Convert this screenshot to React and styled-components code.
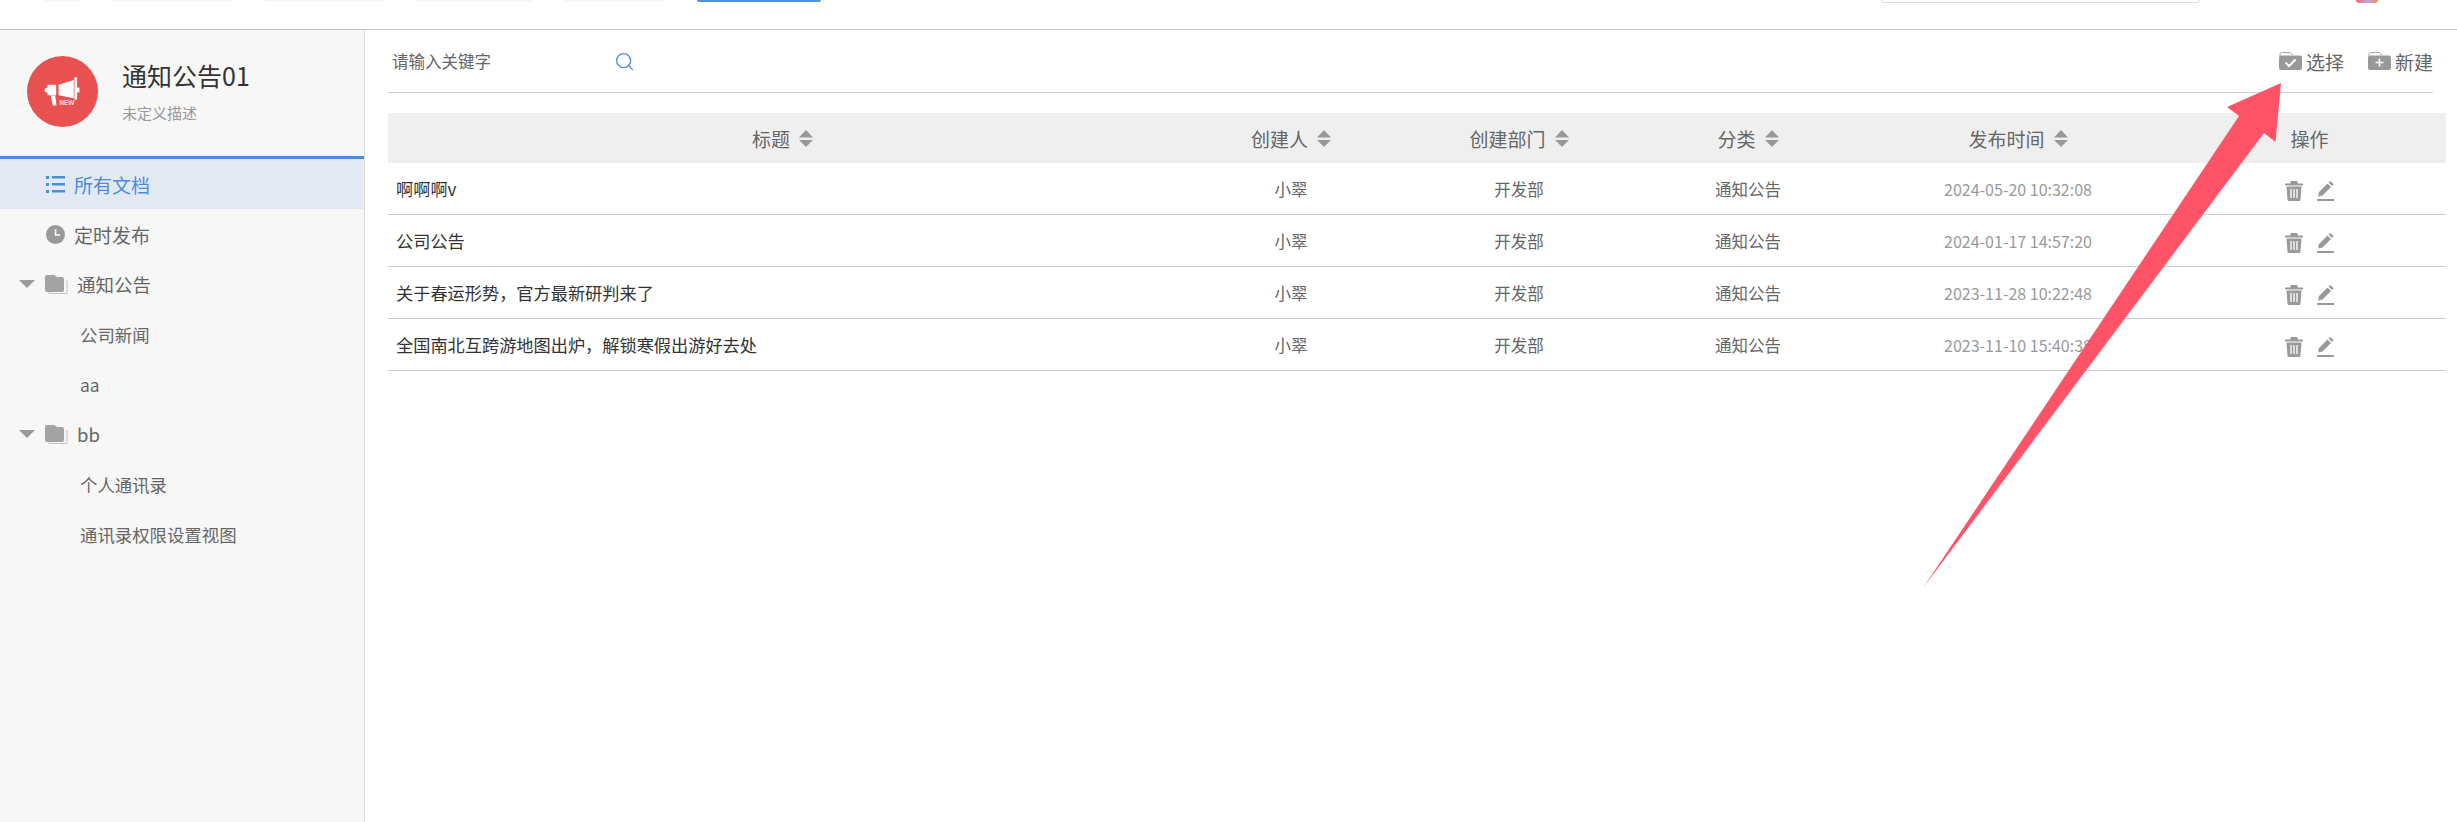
import React from 'react'
import styled, { createGlobalStyle } from 'styled-components'
import { Search } from 'lucide-react'

const GlobalStyle = createGlobalStyle`
    html, body {
        margin: 0;
        padding: 0;
        background: #fff;
        overflow: hidden;
    }
    body {
        font-family: "Noto Sans CJK SC", "Noto Sans", sans-serif;
    }
    * {
        box-sizing: border-box;
    }
`

const tabs = [35, 121, 119, 117, 100]

const tree = [
    { type: 'folder', name: '通知公告' },
    { type: 'sub', name: '公司新闻' },
    { type: 'sub', name: 'aa' },
    { type: 'folder', name: 'bb' },
    { type: 'sub', name: '个人通讯录' },
    { type: 'sub', name: '通讯录权限设置视图' },
]

const columns = [
    { name: '创建人', key: 'user' },
    { name: '创建部门', key: 'dept' },
    { name: '分类', key: 'cat' },
    { name: '发布时间', key: 'time' },
]

const rows = [
    { title: '啊啊啊v', user: '小翠', dept: '开发部', cat: '通知公告', time: '2024-05-20 10:32:08' },
    { title: '公司公告', user: '小翠', dept: '开发部', cat: '通知公告', time: '2024-01-17 14:57:20' },
    { title: '关于春运形势，官方最新研判来了', user: '小翠', dept: '开发部', cat: '通知公告', time: '2023-11-28 10:22:48' },
    { title: '全国南北互跨游地图出炉，解锁寒假出游好去处', user: '小翠', dept: '开发部', cat: '通知公告', time: '2023-11-10 15:40:38' },
]

const LogoIcon = () => (
    <svg width="71" height="71" viewBox="52 48 214 214">
        <circle cx="159" cy="155" r="107" fill="#e95050" />
        <g fill="#fff">
            <path d="M105 151q0-7 9-8v-8h26v31h-26v-7q-9-1-9-8z" />
            <path d="M147 135l46-15v55l-46-9z" />
            <rect x="195" y="112" width="8" height="68" rx="3" />
            <rect x="203" y="143" width="7" height="15" rx="2" />
            <path d="M123 167h14l4 30h-11z" />
        </g>
        <text x="149" y="195" fontSize="20" fontWeight="700" fontFamily="Liberation Sans" fill="#fbd5d5">NEW</text>
    </svg>
)

const ListIcon = () => (
    <svg width="19" height="19" viewBox="0 0 19 19" fill="#4a8ce0">
        <rect x="0" y="1" width="3" height="3" />
        <rect x="6" y="1" width="13" height="2.5" />
        <rect x="0" y="8" width="3" height="3" />
        <rect x="6" y="8" width="13" height="2.5" />
        <rect x="0" y="15" width="3" height="3" />
        <rect x="6" y="15" width="13" height="2.5" />
    </svg>
)

const ClockIcon = () => (
    <svg width="19" height="19" viewBox="0 0 19 19">
        <circle cx="9.5" cy="9.5" r="9.5" fill="#999" />
        <path d="M9.5 4v6h4.5" fill="none" stroke="#fff" strokeWidth="1.6" />
    </svg>
)

const TreeFolderIcon = () => (
    <svg width="23" height="19" viewBox="0 0 23 19">
        <path d="M20.5 6h1.5v12.5H4v-1.5" fill="none" stroke="#c4c4c4" strokeWidth="1" />
        <path d="M0 2a2 2 0 0 1 2-2h7l3 2h5a2 2 0 0 1 2 2v11a2 2 0 0 1-2 2H2a2 2 0 0 1-2-2z" fill="#a3a3a3" />
    </svg>
)

const ToolIcon = ({ plus }) => (
    <svg width="23" height="18" viewBox="0 0 23 18">
        <path d="M1 4V2a1.5 1.5 0 0 1 1.5-1.5H11l3 2.5" fill="none" stroke="#a8a8a8" strokeWidth="1" />
        <path d="M0 5a2 2 0 0 1 2-1.500h19a2 2 0 0 1 2 2V16a2 2 0 0 1-2 2H2a2 2 0 0 1-2-2z" fill="#999" />
        {plus ? (
            <path d="M11.500 6.500v8M7.500 10.500h8" stroke="#fff" strokeWidth="1.600" fill="none" />
        ) : (
            <path d="M6.500 10.500l3.500 3.500 6.500-6.500" stroke="#fff" strokeWidth="2" fill="none" />
        )}
    </svg>
)

const SortIcon = () => (
    <svg width="14" height="17" viewBox="0 0 14 17" fill="#999">
        <path d="M7 0l7 7.500H0z" />
        <path d="M0 10h14l-7 7z" />
    </svg>
)

const TrashIcon = () => (
    <svg width="18" height="20" viewBox="0 0 18 20" fill="#999">
        <path d="M6 0h6l1 2.500h4.500a.5.500 0 0 1 .5.500v1.500H0V3a.5.500 0 0 1 .5-.5H5z" />
        <path d="M1.500 5.500h15l-1 13a1.500 1.500 0 0 1-1.500 1.500H4a1.500 1.500 0 0 1-1.500-1.500z" />
        <path d="M6 8v9M9 8v9M12 8v9" stroke="#fff" strokeWidth="1.300" />
    </svg>
)

const PencilIcon = () => (
    <svg width="17" height="20" viewBox="0 0 17 20" fill="#999">
        <path d="M1 15.500l1-4.500L10.500 2.500l3.500 3.500L5.500 14.500z" />
        <path d="M11.500 1.500l1-1a1 1 0 0 1 1.400 0l2.100 2.100a1 1 0 0 1 0 1.400l-1 1z" />
        <rect x="0" y="18" width="17" height="2" />
    </svg>
)

function App() {
    return (
        <Page>
            <GlobalStyle />
            <TopBar>
                {tabs.map((w, i) => (
                    <Tab key={i} $w={w} />
                ))}
                <Tab $w={124} $active />
                <SearchEdge />
                <AvatarEdge />
            </TopBar>
            <Body>
                <Sidebar>
                    <SideHead>
                        <LogoIcon />
                        <SideInfo>
                            <SideTitle>通知公告01</SideTitle>
                            <SideDesc>未定义描述</SideDesc>
                        </SideInfo>
                    </SideHead>
                    <Nav>
                        <NavItem $active>
                            <ListIcon />
                            所有文档
                        </NavItem>
                        <NavItem>
                            <ClockIcon />
                            定时发布
                        </NavItem>
                        {tree.map((item) =>
                            item.type === 'folder' ? (
                                <FolderItem key={item.name}>
                                    <Caret />
                                    <TreeFolderIcon />
                                    {item.name}
                                </FolderItem>
                            ) : (
                                <SubItem key={item.name}>{item.name}</SubItem>
                            )
                        )}
                    </Nav>
                </Sidebar>
                <Main>
                    <Toolbar>
                        <SearchBox>
                            <SearchInput placeholder="请输入关键字" />
                            <Search size={21} color="#4a8ce0" strokeWidth={1.5} />
                        </SearchBox>
                        <Actions>
                            <ActionButton>
                                <ToolIcon />
                                选择
                            </ActionButton>
                            <ActionButton>
                                <ToolIcon plus />
                                新建
                            </ActionButton>
                        </Actions>
                    </Toolbar>
                    <TableHead>
                        <HeadCell>
                            标题
                            <SortIcon />
                        </HeadCell>
                        {columns.map((col) => (
                            <HeadCell key={col.key}>
                                {col.name}
                                <SortIcon />
                            </HeadCell>
                        ))}
                        <HeadCell>操作</HeadCell>
                    </TableHead>
                    {rows.map((row) => (
                        <TableRow key={row.time}>
                            <TitleCell>{row.title}</TitleCell>
                            <Cell>{row.user}</Cell>
                            <Cell>{row.dept}</Cell>
                            <Cell>{row.cat}</Cell>
                            <TimeCell>{row.time}</TimeCell>
                            <OpsCell>
                                <TrashIcon />
                                <PencilIcon />
                            </OpsCell>
                        </TableRow>
                    ))}
                </Main>
            </Body>
            <Arrow viewBox="0 0 2457 822">
                <polygon points="2281,83 2227,107 2239,116 1923,588 2264,133 2275.500,142" fill="#ff5468" />
            </Arrow>
        </Page>
    )
}

export default App

const gridColumns = '789px 228px 228px 230px 310px 273px'

const Page = styled.div`
    position: relative;
    width: 2457px;
    height: 822px;
    display: flex;
    flex-direction: column;
    overflow: hidden;
`
const TopBar = styled.div`
    height: 30px;
    flex: none;
    display: flex;
    align-items: flex-start;
    gap: 32px;
    padding: 0 79px 0 45px;
    border-bottom: 1px solid #c6c6c6;
`
const Tab = styled.div`
    width: ${(p) => p.$w}px;
    height: 2px;
    border-radius: 0 0 6px 6px;
    background: ${(p) => (p.$active ? '#4f8fdc' : '#f6f6f6')};
`
const SearchEdge = styled.div`
    width: 319px;
    height: 3px;
    margin-left: auto;
    border: 1px solid #dcdcdc;
    border-top: none;
    border-radius: 0 0 8px 8px;
`
const AvatarEdge = styled.div`
    width: 22px;
    height: 3px;
    margin-left: 124px;
    border-radius: 0 0 11px 11px;
    background: linear-gradient(90deg, #ee6a6a, #b9a6e0 50%, #f08a5a);
`
const Body = styled.div`
    flex: 1;
    display: flex;
    min-height: 0;
`
const Sidebar = styled.div`
    width: 365px;
    flex: none;
    background: #f7f7f7;
    border-right: 1px solid #ddd;
`
const SideHead = styled.div`
    height: 126px;
    display: flex;
    align-items: center;
    gap: 24px;
    padding: 0 0 3px 27px;
`
const SideInfo = styled.div`
    display: flex;
    flex-direction: column;
    gap: 12px;
`
const SideTitle = styled.div`
    font-size: 25px;
    line-height: 30px;
    color: #333;
`
const SideDesc = styled.div`
    font-size: 15px;
    line-height: 22px;
    color: #999;
`
const Nav = styled.div`
    border-top: 3px solid #4a8ce0;
`
const NavItem = styled.div`
    height: 50px;
    display: flex;
    align-items: center;
    gap: 9px;
    padding-left: 46px;
    font-size: 19px;
    color: ${(p) => (p.$active ? '#4a8ce0' : '#666')};
    background: ${(p) => (p.$active ? '#e2e9f3' : 'transparent')};
`
const FolderItem = styled(NavItem)`
    padding-left: 19px;
    font-size: 18.500px;
`
const Caret = styled.span`
    width: 0;
    height: 0;
    margin-right: 1px;
    border-left: 8px solid transparent;
    border-right: 8px solid transparent;
    border-top: 8px solid #999;
`
const SubItem = styled.div`
    height: 50px;
    display: flex;
    align-items: center;
    padding-left: 80px;
    font-size: 17.400px;
    color: #666;
`
const Main = styled.div`
    flex: 1;
    min-width: 0;
    padding: 0 11px 0 23px;
`
const Toolbar = styled.div`
    height: 63px;
    margin-right: 13px;
    margin-bottom: 20px;
    display: flex;
    align-items: center;
    justify-content: space-between;
    border-bottom: 1px solid #ccc;
`
const SearchBox = styled.div`
    display: flex;
    align-items: center;
    padding-left: 4px;
`
const SearchInput = styled.input`
    width: 222px;
    padding: 0;
    border: none;
    outline: none;
    background: transparent;
    font-family: inherit;
    font-size: 16.500px;
    color: #666;

    &::placeholder {
        color: #666;
        opacity: 1;
    }
`
const Actions = styled.div`
    display: flex;
    gap: 24px;
`
const ActionButton = styled.div`
    display: flex;
    align-items: center;
    gap: 4px;
    font-size: 19px;
    color: #666;
`
const TableHead = styled.div`
    height: 50px;
    display: grid;
    grid-template-columns: ${gridColumns};
    background: #efefef;
`
const HeadCell = styled.div`
    display: flex;
    align-items: center;
    justify-content: center;
    gap: 9px;
    font-size: 19px;
    color: #666;
`
const TableRow = styled.div`
    height: 52px;
    display: grid;
    grid-template-columns: ${gridColumns};
    border-bottom: 1px solid #ccc;
`
const Cell = styled.div`
    display: flex;
    align-items: center;
    justify-content: center;
    font-size: 16.500px;
    color: #666;
`
const TitleCell = styled(Cell)`
    justify-content: flex-start;
    padding-left: 8px;
    font-size: 17.200px;
    color: #333;
`
const TimeCell = styled(Cell)`
    font-size: 16px;
    color: #999;
`
const OpsCell = styled(Cell)`
    gap: 14px;
    padding-top: 4px;
`
const Arrow = styled.svg`
    position: absolute;
    top: 0;
    left: 0;
    width: 2457px;
    height: 822px;
    pointer-events: none;
`
